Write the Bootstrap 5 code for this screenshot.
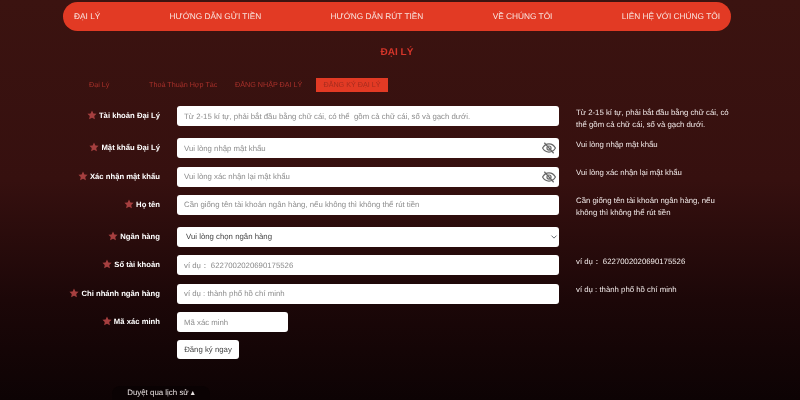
<!DOCTYPE html>
<html lang="en">
<head>
  <meta charset="UTF-8">
  <title>Đăng ký đại lý</title>
  <link href="https://cdn.jsdelivr.net/npm/bootstrap@5.3.0/dist/css/bootstrap.min.css" rel="stylesheet">
  <style>
    html, body { height: 400px; overflow: hidden; }
    body {
      font-family: "Liberation Sans", Arial, sans-serif;
      font-size: 8px;
      text-rendering: geometricPrecision;
      background: linear-gradient(180deg, #3b1310 0%, #36100f 45%, #1c0708 75%, #0d0304 100%);
      color: #f1eaea;
    }
    .page-wrap { width: 668px; margin-left: 63px; padding-top: 2px; will-change: opacity; }
    .top-menu {
      height: 29px;
      background: #e23a24;
      border-radius: 15px;
      padding: 0 11px;
    }
    .top-menu a { color: #f9e6e1; text-decoration: none; font-size: 8.3px; }
    .page-title { color: #d5352a; font-size: 10px; font-weight: 700; text-align: center; margin: 15px 0 18px; line-height: 14px; }
    .tab-row { height: 14px; margin-bottom: 14px; margin-left: 26px; }
    .tab-row a { color: #a8302a; text-decoration: none; font-size: 7.2px; line-height: 14px; white-space: nowrap; }
    .tab-row .tab-agent { width: 60px; }
    .tab-row .tab-terms { width: 86px; }
    .tab-row .tab-login { width: 81px; }
    .tab-row .tab-on { background: #e23a24; color: #a62c1e; width: 72px; text-align: center; }
    .form-line { display: flex; align-items: flex-start; margin-bottom: 8.3px; min-height: 20px; }
    .form-label-cell {
      width: 97px;
      flex: none;
      font-weight: 700;
      font-size: 7.7px;
      line-height: 20px;
      text-align: right;
      color: #fff;
      white-space: nowrap;
    }
    .form-label-cell svg { width: 10px; height: 10px; margin-right: 2px; vertical-align: -2px; fill: #a63f3f; }
    .field-cell { width: 382px; margin-left: 17px; flex: none; position: relative; }
    .field-cell .form-control, .field-cell .form-select {
      height: 20px;
      min-height: 20px;
      font-size: 7.8px;
      padding: 0 7px;
      border-radius: 3px;
      border: 0;
      color: #444;
      font-family: inherit;
      text-rendering: geometricPrecision;
    }
    .field-cell .form-control::placeholder { color: #8c8c8c; opacity: 1; }
    .field-cell .form-select {
      padding-left: 9px;
      background-size: 8px 6px;
      background-position: right 1px center;
    }
    .eye-icon { position: absolute; right: 3px; top: 3px; width: 14px; height: 14px; fill: none; stroke: #666; stroke-width: 2; }
    .captcha-cell { width: 111px; }
    .hint-cell { margin-left: 17px; width: 160px; line-height: 12px; padding-top: .5px; margin-bottom: -.5px; font-size: 7.8px; color: #f1e9e8; }
    .submit-btn {
      height: 19px;
      width: 62px;
      padding: 0;
      font-size: 7.8px;
      background: #fff;
      color: #444;
      border: 0;
      border-radius: 3px;
      text-rendering: geometricPrecision;
      --bs-btn-hover-bg: #fff;
    }
    .submit-btn span { display: inline-block; will-change: opacity; }
    .history-tab { position: absolute; left: 112px; bottom: 0; width: 98px; height: 14px; text-align: center; font-size: 7.9px; line-height: 14px; background: #0a0203; border-radius: 8px 8px 0 0; color: #e9e2e2; will-change: opacity; }
  </style>
</head>
<body>

<div class="page-wrap">
  <nav class="top-menu d-flex justify-content-between align-items-center">
    <a href="#">ĐẠI LÝ</a>
    <a href="#">HƯỚNG DẪN GỬI TIỀN</a>
    <a href="#">HƯỚNG DẪN RÚT TIỀN</a>
    <a href="#">VỀ CHÚNG TÔI</a>
    <a href="#">LIÊN HỆ VỚI CHÚNG TÔI</a>
  </nav>

  <div class="page-title">ĐẠI LÝ</div>

  <div class="tab-row d-flex">
    <a href="#" class="tab-agent">Đại Lý</a>
    <a href="#" class="tab-terms">Thoả Thuận Hợp Tác</a>
    <a href="#" class="tab-login">ĐĂNG NHẬP ĐẠI LÝ</a>
    <a href="#" class="tab-on">ĐĂNG KÝ ĐẠI LÝ</a>
  </div>

  <form>
    <div class="form-line">
      <div class="form-label-cell"><svg viewBox="0 0 24 24"><path d="M12 1l3.4 7.2 7.6 1-5.6 5.3 1.5 7.8L12 18.4l-6.9 3.9 1.5-7.8L1 9.2l7.6-1z"/></svg>Tài khoản Đại Lý</div>
      <div class="field-cell"><input class="form-control" placeholder="Từ 2-15 kí tự, phải bắt đầu bằng chữ cái, có thể  gồm cả chữ cái, số và gạch dưới."></div>
      <div class="hint-cell">Từ 2-15 kí tự, phải bắt đầu bằng chữ cái, có thể gồm cả chữ cái, số và gạch dưới.</div>
    </div>
    <div class="form-line">
      <div class="form-label-cell"><svg viewBox="0 0 24 24"><path d="M12 1l3.4 7.2 7.6 1-5.6 5.3 1.5 7.8L12 18.4l-6.9 3.9 1.5-7.8L1 9.2l7.6-1z"/></svg>Mật khẩu Đại Lý</div>
      <div class="field-cell"><input class="form-control" placeholder="Vui lòng nhập mật khẩu">
        <svg class="eye-icon" viewBox="0 0 24 24"><path d="M1 12s4-7 11-7 11 7 11 7-4 7-11 7-11-7-11-7z"/><circle cx="12" cy="12" r="3.5"/><path d="M4 3l16 18"/></svg></div>
      <div class="hint-cell">Vui lòng nhập mật khẩu</div>
    </div>
    <div class="form-line">
      <div class="form-label-cell"><svg viewBox="0 0 24 24"><path d="M12 1l3.4 7.2 7.6 1-5.6 5.3 1.5 7.8L12 18.4l-6.9 3.9 1.5-7.8L1 9.2l7.6-1z"/></svg>Xác nhận mật khẩu</div>
      <div class="field-cell"><input class="form-control" placeholder="Vui lòng xác nhận lại mật khẩu">
        <svg class="eye-icon" viewBox="0 0 24 24"><path d="M1 12s4-7 11-7 11 7 11 7-4 7-11 7-11-7-11-7z"/><circle cx="12" cy="12" r="3.5"/><path d="M4 3l16 18"/></svg></div>
      <div class="hint-cell">Vui lòng xác nhận lại mật khẩu</div>
    </div>
    <div class="form-line">
      <div class="form-label-cell"><svg viewBox="0 0 24 24"><path d="M12 1l3.4 7.2 7.6 1-5.6 5.3 1.5 7.8L12 18.4l-6.9 3.9 1.5-7.8L1 9.2l7.6-1z"/></svg>Họ tên</div>
      <div class="field-cell"><input class="form-control" placeholder="Cần giống tên tài khoản ngân hàng, nếu không thì không thể rút tiền"></div>
      <div class="hint-cell">Cần giống tên tài khoản ngân hàng, nếu không thì không thể rút tiền</div>
    </div>
    <div class="form-line">
      <div class="form-label-cell"><svg viewBox="0 0 24 24"><path d="M12 1l3.4 7.2 7.6 1-5.6 5.3 1.5 7.8L12 18.4l-6.9 3.9 1.5-7.8L1 9.2l7.6-1z"/></svg>Ngân hàng</div>
      <div class="field-cell"><select class="form-select"><option>Vui lòng chọn ngân hàng</option></select></div>
    </div>
    <div class="form-line">
      <div class="form-label-cell"><svg viewBox="0 0 24 24"><path d="M12 1l3.4 7.2 7.6 1-5.6 5.3 1.5 7.8L12 18.4l-6.9 3.9 1.5-7.8L1 9.2l7.6-1z"/></svg>Số tài khoản</div>
      <div class="field-cell"><input class="form-control" placeholder="ví dụ： 6227002020690175526"></div>
      <div class="hint-cell">ví dụ： 6227002020690175526</div>
    </div>
    <div class="form-line">
      <div class="form-label-cell"><svg viewBox="0 0 24 24"><path d="M12 1l3.4 7.2 7.6 1-5.6 5.3 1.5 7.8L12 18.4l-6.9 3.9 1.5-7.8L1 9.2l7.6-1z"/></svg>Chi nhánh ngân hàng</div>
      <div class="field-cell"><input class="form-control" placeholder="ví dụ : thành phố hồ chí minh"></div>
      <div class="hint-cell">ví dụ : thành phố hồ chí minh</div>
    </div>
    <div class="form-line">
      <div class="form-label-cell"><svg viewBox="0 0 24 24"><path d="M12 1l3.4 7.2 7.6 1-5.6 5.3 1.5 7.8L12 18.4l-6.9 3.9 1.5-7.8L1 9.2l7.6-1z"/></svg>Mã xác minh</div>
      <div class="field-cell"><input class="form-control captcha-cell" placeholder="Mã xác minh"></div>
    </div>
    <div class="form-line">
      <div class="form-label-cell"></div>
      <div class="field-cell"><button type="button" class="btn submit-btn"><span>Đăng ký ngay</span></button></div>
    </div>
  </form>
</div>

<div class="history-tab">Duyệt qua lịch sử ▴</div>

<script src="https://cdn.jsdelivr.net/npm/bootstrap@5.3.0/dist/js/bootstrap.bundle.min.js"></script>
</body>
</html>
